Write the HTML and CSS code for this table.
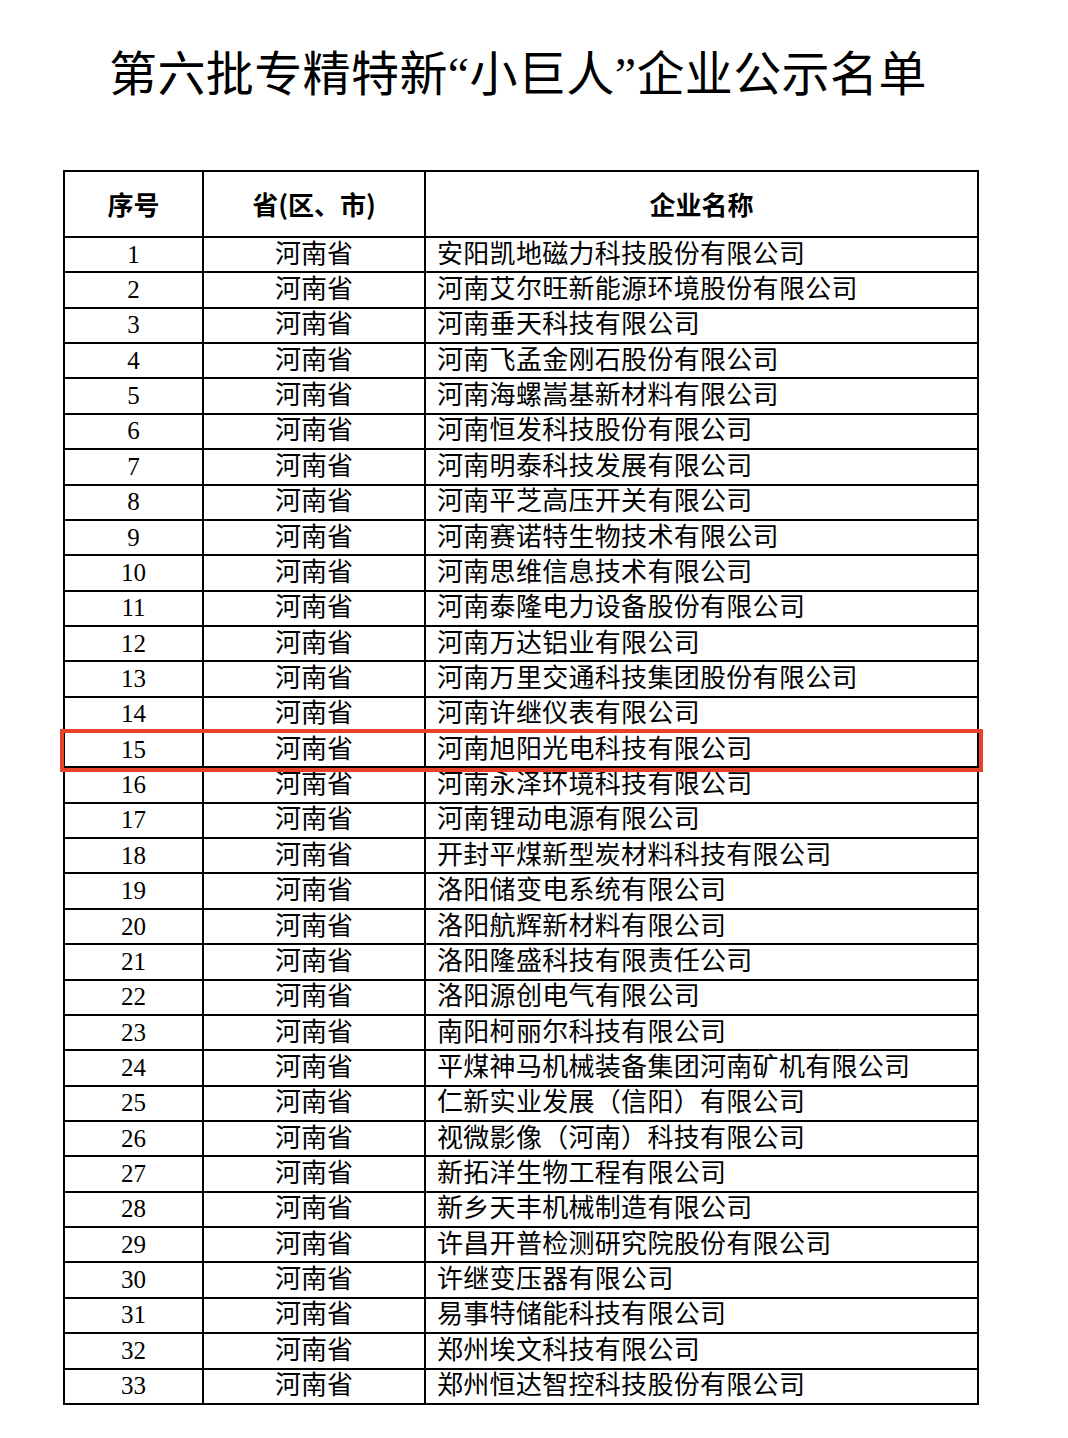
FILE: index.html
```html
<!DOCTYPE html>
<html lang="zh-CN">
<head>
<meta charset="utf-8">
<title>第六批专精特新“小巨人”企业公示名单</title>
<link rel="stylesheet" href="styles.css">
</head>
<body>
<div class="page">
  <h1 class="title">第六批专精特新“小巨人”企业公示名单</h1>
  <div class="table-wrap">
    <table class="list">
      <colgroup>
        <col class="c-no">
        <col class="c-prov">
        <col class="c-name">
      </colgroup>
      <thead>
        <tr><th>序号</th><th>省(区、市)</th><th>企业名称</th></tr>
      </thead>
      <tbody>
        <tr><td class="no">1</td><td class="prov">河南省</td><td class="name">安阳凯地磁力科技股份有限公司</td></tr>
        <tr><td class="no">2</td><td class="prov">河南省</td><td class="name">河南艾尔旺新能源环境股份有限公司</td></tr>
        <tr><td class="no">3</td><td class="prov">河南省</td><td class="name">河南垂天科技有限公司</td></tr>
        <tr><td class="no">4</td><td class="prov">河南省</td><td class="name">河南飞孟金刚石股份有限公司</td></tr>
        <tr><td class="no">5</td><td class="prov">河南省</td><td class="name">河南海螺嵩基新材料有限公司</td></tr>
        <tr><td class="no">6</td><td class="prov">河南省</td><td class="name">河南恒发科技股份有限公司</td></tr>
        <tr><td class="no">7</td><td class="prov">河南省</td><td class="name">河南明泰科技发展有限公司</td></tr>
        <tr><td class="no">8</td><td class="prov">河南省</td><td class="name">河南平芝高压开关有限公司</td></tr>
        <tr><td class="no">9</td><td class="prov">河南省</td><td class="name">河南赛诺特生物技术有限公司</td></tr>
        <tr><td class="no">10</td><td class="prov">河南省</td><td class="name">河南思维信息技术有限公司</td></tr>
        <tr><td class="no">11</td><td class="prov">河南省</td><td class="name">河南泰隆电力设备股份有限公司</td></tr>
        <tr><td class="no">12</td><td class="prov">河南省</td><td class="name">河南万达铝业有限公司</td></tr>
        <tr><td class="no">13</td><td class="prov">河南省</td><td class="name">河南万里交通科技集团股份有限公司</td></tr>
        <tr><td class="no">14</td><td class="prov">河南省</td><td class="name">河南许继仪表有限公司</td></tr>
        <tr><td class="no">15</td><td class="prov">河南省</td><td class="name">河南旭阳光电科技有限公司</td></tr>
        <tr><td class="no">16</td><td class="prov">河南省</td><td class="name">河南永泽环境科技有限公司</td></tr>
        <tr><td class="no">17</td><td class="prov">河南省</td><td class="name">河南锂动电源有限公司</td></tr>
        <tr><td class="no">18</td><td class="prov">河南省</td><td class="name">开封平煤新型炭材料科技有限公司</td></tr>
        <tr><td class="no">19</td><td class="prov">河南省</td><td class="name">洛阳储变电系统有限公司</td></tr>
        <tr><td class="no">20</td><td class="prov">河南省</td><td class="name">洛阳航辉新材料有限公司</td></tr>
        <tr><td class="no">21</td><td class="prov">河南省</td><td class="name">洛阳隆盛科技有限责任公司</td></tr>
        <tr><td class="no">22</td><td class="prov">河南省</td><td class="name">洛阳源创电气有限公司</td></tr>
        <tr><td class="no">23</td><td class="prov">河南省</td><td class="name">南阳柯丽尔科技有限公司</td></tr>
        <tr><td class="no">24</td><td class="prov">河南省</td><td class="name">平煤神马机械装备集团河南矿机有限公司</td></tr>
        <tr><td class="no">25</td><td class="prov">河南省</td><td class="name">仁新实业发展（信阳）有限公司</td></tr>
        <tr><td class="no">26</td><td class="prov">河南省</td><td class="name">视微影像（河南）科技有限公司</td></tr>
        <tr><td class="no">27</td><td class="prov">河南省</td><td class="name">新拓洋生物工程有限公司</td></tr>
        <tr><td class="no">28</td><td class="prov">河南省</td><td class="name">新乡天丰机械制造有限公司</td></tr>
        <tr><td class="no">29</td><td class="prov">河南省</td><td class="name">许昌开普检测研究院股份有限公司</td></tr>
        <tr><td class="no">30</td><td class="prov">河南省</td><td class="name">许继变压器有限公司</td></tr>
        <tr><td class="no">31</td><td class="prov">河南省</td><td class="name">易事特储能科技有限公司</td></tr>
        <tr><td class="no">32</td><td class="prov">河南省</td><td class="name">郑州埃文科技有限公司</td></tr>
        <tr><td class="no">33</td><td class="prov">河南省</td><td class="name">郑州恒达智控科技股份有限公司</td></tr>
      </tbody>
    </table>
    <div class="highlight"></div>
  </div>
</div>
</body>
</html>
```

FILE: styles.css
```css
html, body {
  margin: 0;
  padding: 0;
  background: #ffffff;
}

body {
  font-family: "Liberation Serif", "Noto Sans CJK SC", serif;
  color: #000000;
}

.page {
  width: 1068px;
  height: 1438px;
  overflow: hidden;
}

.title {
  margin: 0 0 0 109px;
  padding-top: 51px;
  height: 48px;
  font-size: 48px;
  line-height: 48px;
  font-weight: 400;
  letter-spacing: 0.4px;
  white-space: nowrap;
}

.table-wrap {
  position: relative;
  margin-top: 71px;
  margin-left: 63px;
  width: 914px;
}

.list {
  border-collapse: collapse;
  table-layout: fixed;
  width: 914px;
}

.c-no { width: 139px; }
.c-prov { width: 222px; }
.c-name { width: 553px; }

.list th,
.list td {
  border: 2px solid #000000;
  padding: 0;
  vertical-align: middle;
  white-space: nowrap;
}

.list thead tr {
  height: 66px;
}

.list th {
  font-family: "Noto Sans CJK SC", sans-serif;
  font-weight: 700;
  font-size: 26px;
  line-height: 30px;
  text-align: center;
}

.list tbody tr {
  height: 35.36px;
}

.list td {
  font-size: 26px;
  line-height: 30px;
}

.list td.no {
  text-align: center;
  font-size: 25px;
}

.list td.prov {
  text-align: center;
}

.list td.name {
  text-align: left;
  padding-left: 11px;
  letter-spacing: 0.3px;
}

.highlight {
  position: absolute;
  left: -3px;
  top: 559px;
  width: 923px;
  height: 43px;
  box-sizing: border-box;
  border: 4.5px solid #e8432a;
  pointer-events: none;
}
```
